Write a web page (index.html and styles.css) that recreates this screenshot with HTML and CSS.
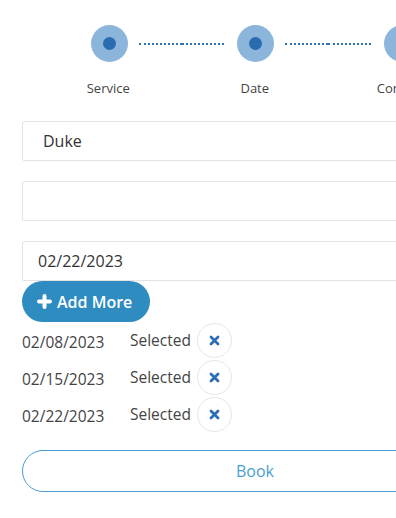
FILE: index.html
```html
<!DOCTYPE html>
<html lang="en">
<head>
  <meta charset="UTF-8" />
  <meta name="viewport" content="width=device-width, initial-scale=1.0"/>
  <title>Booking</title>
  <link rel="stylesheet" href="styles.css">
</head>
<body>
  <div class="page">

    <!-- steps -->
    <div class="stepper">
      <div class="step first">
        <div class="track">
          <span class="line"></span>
          <span class="dot"><span></span></span>
          <span class="line"></span>
        </div>
        <div class="step-label">Service</div>
      </div>
      <div class="step">
        <div class="track">
          <span class="line"></span>
          <span class="dot"><span></span></span>
          <span class="line"></span>
        </div>
        <div class="step-label">Date</div>
      </div>
      <div class="step last">
        <div class="track">
          <span class="line"></span>
          <span class="dot"><span></span></span>
          <span class="line"></span>
        </div>
        <div class="step-label">Confirm</div>
      </div>
    </div>

    <!-- form -->
    <input class="field field-select" type="text" value="Duke" readonly>
    <input class="field" type="text" value="">
    <input class="field field-date" type="text" value="02/22/2023">

    <button class="add-btn">
      <svg width="15" height="15" viewBox="0 0 15 15"><path d="M7.5 2v11M2 7.5h11" stroke="#fff" stroke-width="4" stroke-linecap="round"/></svg>
      Add More
    </button>

    <div class="dates">
      <div class="date-row">
        <span class="date">02/08/2023</span>
        <span class="status">Selected</span>
        <button class="remove"><svg width="11" height="11" viewBox="0 0 11 11"><path d="M2 2l7 7M9 2l-7 7" stroke="#2d6db3" stroke-width="2.8" stroke-linecap="round"/></svg></button>
      </div>
      <div class="date-row">
        <span class="date">02/15/2023</span>
        <span class="status">Selected</span>
        <button class="remove"><svg width="11" height="11" viewBox="0 0 11 11"><path d="M2 2l7 7M9 2l-7 7" stroke="#2d6db3" stroke-width="2.8" stroke-linecap="round"/></svg></button>
      </div>
      <div class="date-row">
        <span class="date">02/22/2023</span>
        <span class="status">Selected</span>
        <button class="remove"><svg width="11" height="11" viewBox="0 0 11 11"><path d="M2 2l7 7M9 2l-7 7" stroke="#2d6db3" stroke-width="2.8" stroke-linecap="round"/></svg></button>
      </div>
    </div>

    <button class="book-btn">Book</button>
  </div>
</body>
</html>
```

FILE: styles.css
```css
* { margin: 0; padding: 0; box-sizing: border-box; font-family: 'Open Sans', sans-serif; }
html, body { overflow: hidden; }
body { background: #fff; color: #333; }

.page {
  width: 488px;
  padding: 25px 0 0 22px;
}

/* stepper */
.stepper { display: flex; margin-left: 13px; }
.step {
  width: 146.5px; flex: none;
  display: flex; flex-direction: column; align-items: center;
}
.track { display: flex; align-items: center; width: 100%; }
.line { flex: 1; border-top: 2px dotted #2f74b8; }
.track .line:first-child { margin-right: 13px; }
.track .line:last-child { margin-left: 11px; }
.step.first .track .line:first-child,
.step.last .track .line:last-child { visibility: hidden; }
.dot {
  width: 37px; height: 37px; border-radius: 50%;
  background: #8bb5db;
  display: flex; align-items: center; justify-content: center;
}
.dot span { width: 13px; height: 13px; border-radius: 50%; background: #2b6cb0; }
.step-label { margin-top: 17px; font-size: 13px; line-height: 18px; color: #444; }

/* fields */
.field {
  display: block; width: 466px; height: 40px;
  margin-top: 20px;
  border: 1px solid #e3e3e3; border-radius: 2px;
  padding: 0 15px;
  font-size: 16px; color: #333; background: #fff; outline: none;
}
.field-select { margin-top: 24px; padding-left: 20px; }

.add-btn {
  display: flex; align-items: center; gap: 5px;
  width: 128px; height: 41px; padding: 0 0 0 15px;
  border: none; border-radius: 21px;
  background: #2e8cc1; color: #fff;
  font-size: 16px; font-weight: 600;
  cursor: pointer;
}

/* selected dates */
.dates { margin-top: 1px; display: flex; flex-direction: column; gap: 2px; }
.date-row { display: flex; align-items: center; height: 35px; font-size: 15.5px; color: #444; }
.date { width: 108px; padding-top: 2px; }
.status { width: 67px; margin-top: -2px; }
.remove {
  width: 35px; height: 35px; border-radius: 50%;
  border: 1px solid #e6e6e6; background: #fff;
  display: flex; align-items: center; justify-content: center;
  cursor: pointer;
}

.book-btn {
  display: block; width: 466px; height: 42px;
  margin-top: 18px;
  border: 1.5px solid #4a9ed0; border-radius: 21px;
  background: #fff; color: #4a9ed0;
  font-size: 16px; cursor: pointer;
}
```
